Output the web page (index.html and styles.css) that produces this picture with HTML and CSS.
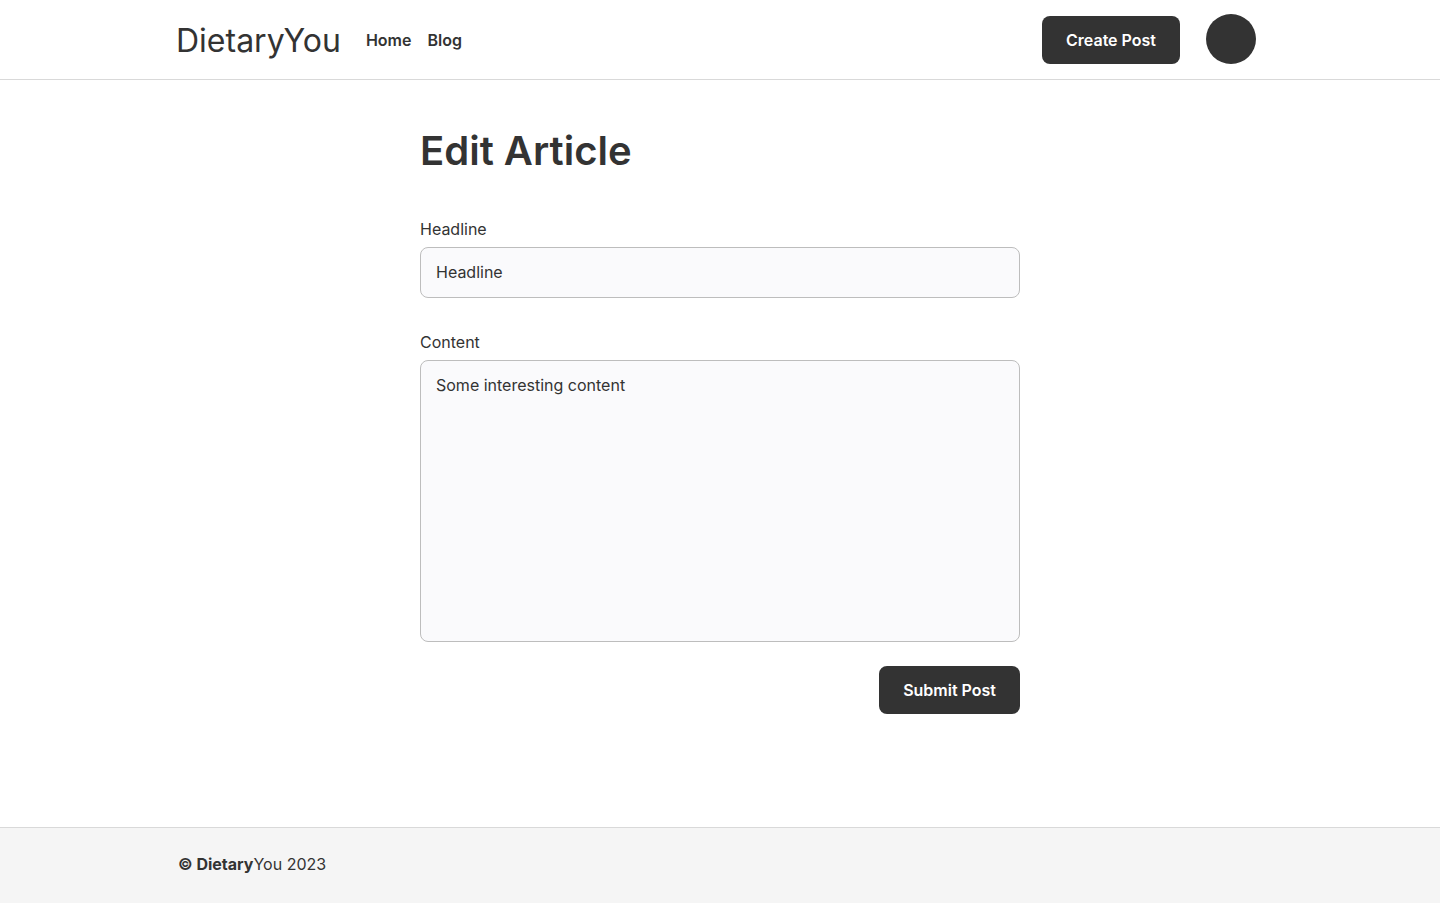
FILE: index.html
```html
<!DOCTYPE html>
<html lang="en">
<head>
<meta charset="utf-8">
<meta name="viewport" content="width=device-width, initial-scale=1">
<title>Edit Article – DietaryYou</title>
<link rel="stylesheet" href="styles.css">
</head>
<body>
<header class="site-header">
  <div class="container header-inner">
    <a class="brand" href="#">DietaryYou</a>
    <nav class="nav">
      <a href="#">Home</a>
      <a href="#">Blog</a>
    </nav>
    <div class="actions">
      <button class="button" type="button">Create Post</button>
      <button class="avatar" type="button" aria-label="Account"></button>
    </div>
  </div>
</header>
<main class="main">
  <h1 class="title">Edit Article</h1>
  <form class="form">
    <div class="field">
      <label for="headline">Headline</label>
      <input class="control" id="headline" type="text" value="Headline">
    </div>
    <div class="field">
      <label for="content">Content</label>
      <textarea class="control area" id="content">Some interesting content</textarea>
    </div>
    <button class="button submit" type="button">Submit Post</button>
  </form>
</main>
<footer class="site-footer">
  <div class="container footer-inner"><strong>© Dietary</strong>You 2023</div>
</footer>
</body>
</html>
```

FILE: styles.css
```css
* {
  box-sizing: border-box;
}

body {
  margin: 0;
  min-height: 100vh;
  display: flex;
  flex-direction: column;
  background: #fff;
  color: #333;
  font: 400 16px/24px Inter, sans-serif;
}

a {
  color: inherit;
  text-decoration: none;
}

.container {
  width: 100%;
  max-width: 1128px;
  margin: 0 auto;
}

.site-header {
  border-bottom: 1px solid #d9d9d9;
}

.header-inner {
  display: flex;
  align-items: flex-end;
  padding: 14px 28px 15px 20px;
}

.brand {
  font-size: 32px;
  line-height: 46px;
}

.nav {
  display: flex;
  gap: 16px;
  margin-left: 25px;
  font-weight: 600;
  line-height: 48px;
}

.actions {
  display: flex;
  align-items: flex-end;
  gap: 26px;
  margin-left: auto;
}

.button {
  height: 48px;
  padding: 0 24px;
  border: 0;
  border-radius: 8px;
  background: #333;
  color: #fff;
  font: inherit;
  font-weight: 600;
  cursor: pointer;
}

.avatar {
  width: 50px;
  height: 50px;
  padding: 0;
  border: 0;
  border-radius: 50%;
  background: #333;
  cursor: pointer;
}

.main {
  flex: 1;
  width: 100%;
  max-width: 648px;
  margin: 0 auto;
  padding: 46px 24px;
}

.title {
  margin: 0 0 41px;
  font-size: 40px;
  line-height: 50px;
  font-weight: 600;
}

.form {
  display: flex;
  flex-direction: column;
}

.field {
  display: flex;
  flex-direction: column;
  gap: 6px;
  margin-bottom: 32px;
}

.control {
  width: 100%;
  height: 51px;
  padding: 12px 15px 13px;
  border: 1px solid #bdbdbd;
  border-radius: 8px;
  background: #fafafc;
  color: inherit;
  font: inherit;
}

.area {
  display: block;
  height: 282px;
  resize: none;
}

.submit {
  align-self: flex-end;
  margin-top: -8px;
}

.site-footer {
  border-top: 1px solid #d9d9d9;
  background: #f5f5f5;
}

.footer-inner {
  padding: 24px 22px 27px;
}
```
